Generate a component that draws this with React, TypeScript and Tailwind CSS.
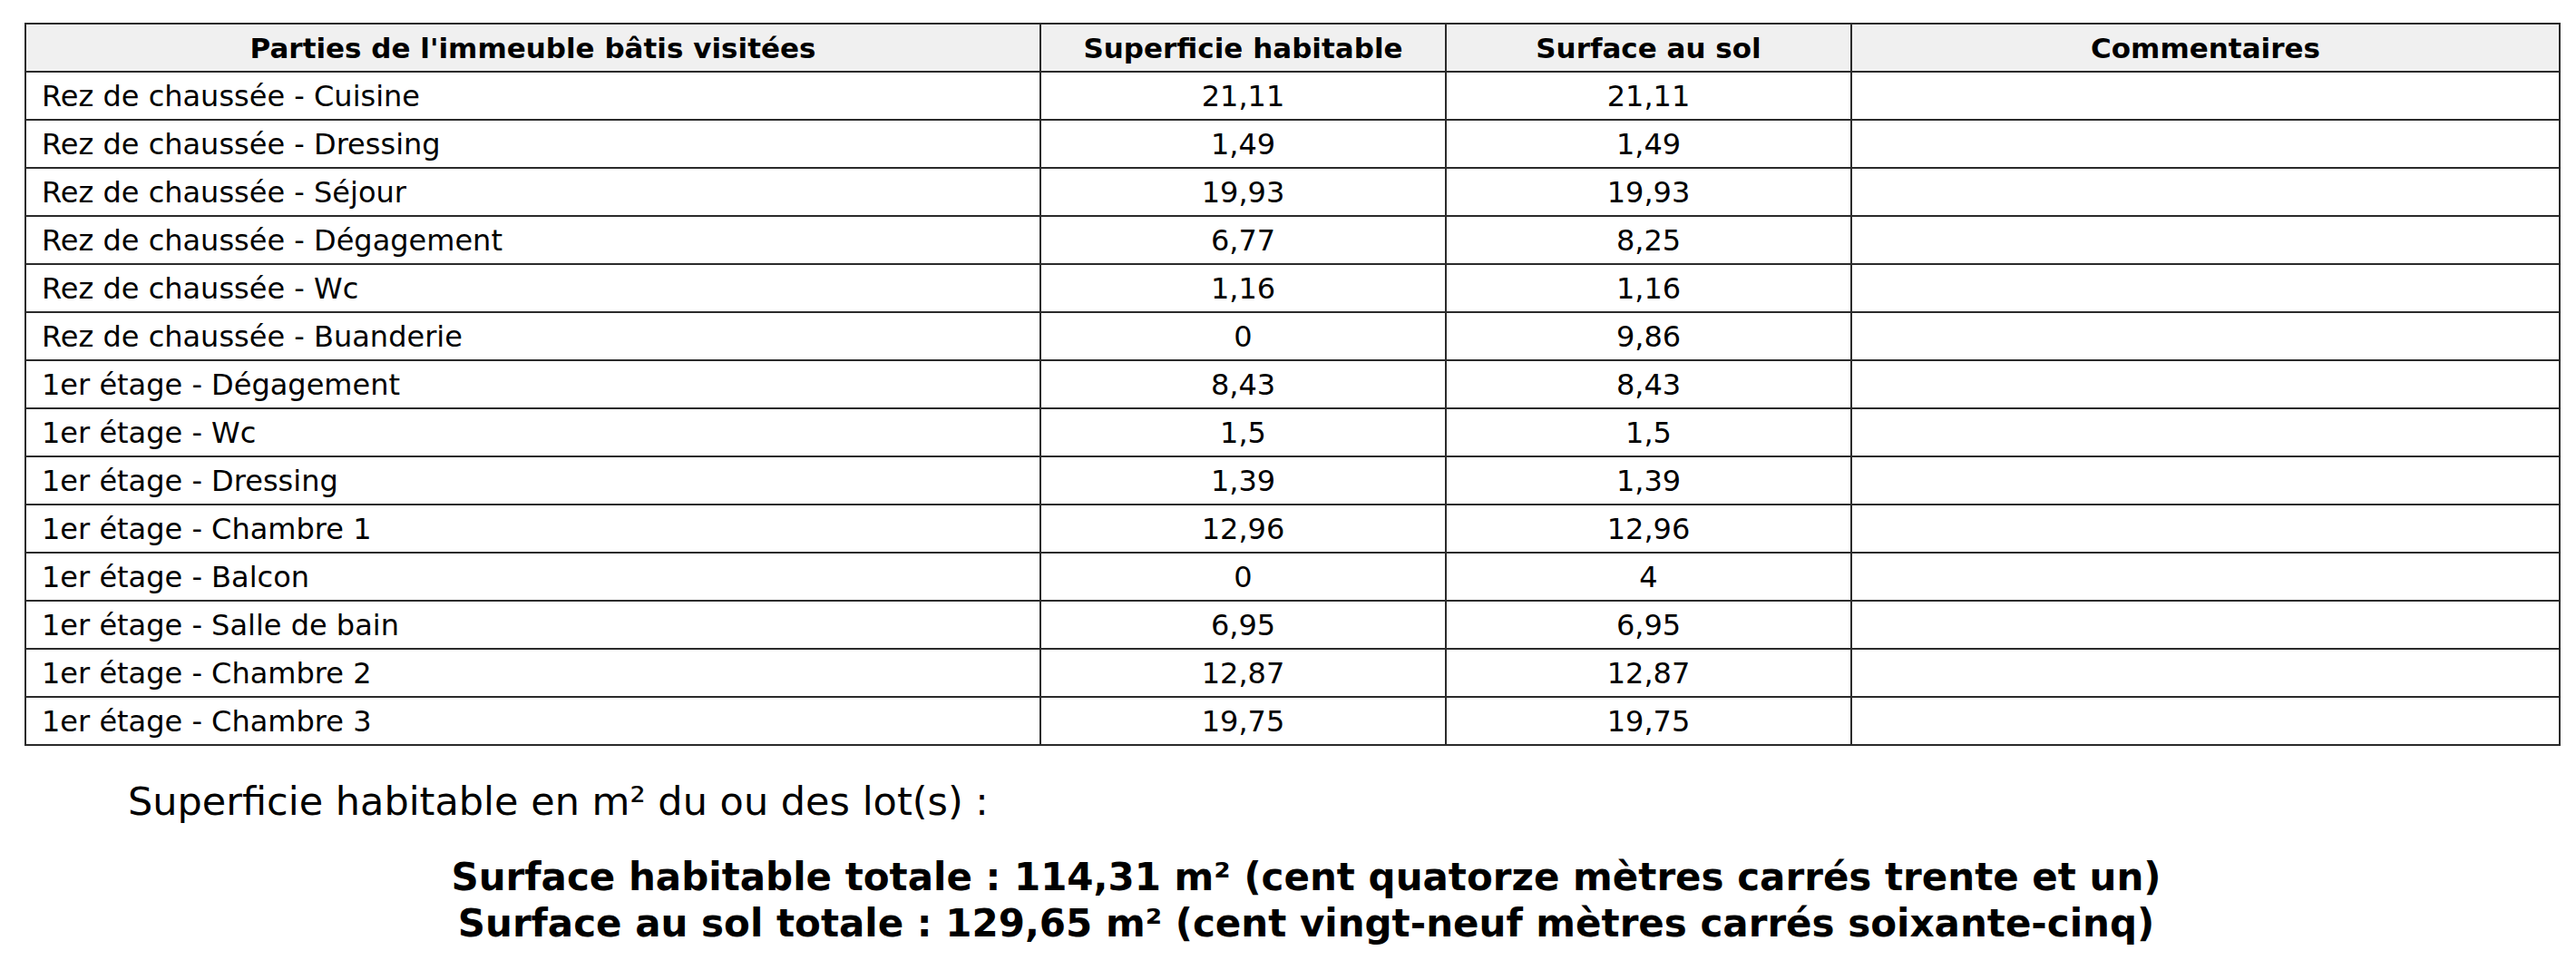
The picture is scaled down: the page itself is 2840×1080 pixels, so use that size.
import React from "react";

const rows: [string, string, string][] = [
  ["Rez de chaussée - Cuisine", "21,11", "21,11"],
  ["Rez de chaussée - Dressing", "1,49", "1,49"],
  ["Rez de chaussée - Séjour", "19,93", "19,93"],
  ["Rez de chaussée - Dégagement", "6,77", "8,25"],
  ["Rez de chaussée - Wc", "1,16", "1,16"],
  ["Rez de chaussée - Buanderie", "0", "9,86"],
  ["1er étage - Dégagement", "8,43", "8,43"],
  ["1er étage - Wc", "1,5", "1,5"],
  ["1er étage - Dressing", "1,39", "1,39"],
  ["1er étage - Chambre 1", "12,96", "12,96"],
  ["1er étage - Balcon", "0", "4"],
  ["1er étage - Salle de bain", "6,95", "6,95"],
  ["1er étage - Chambre 2", "12,87", "12,87"],
  ["1er étage - Chambre 3", "19,75", "19,75"],
];

export default function App() {
  return (
    <div className="w-[2840px] h-[1080px] bg-white text-black overflow-hidden font-['DejaVu_Sans',_Verdana,_sans-serif]">
      <div className="pt-[25px] pl-[27px]">
        <table className="border-collapse table-fixed w-[2794px]">
          <colgroup>
            <col className="w-[1119px]" />
            <col className="w-[447px]" />
            <col className="w-[447px]" />
            <col className="w-[781px]" />
          </colgroup>
          <thead>
            <tr className="bg-[#f0f0f0] h-[53px]">
              <th className="border-2 border-[#2b2b2b] text-[31px] leading-[36px] font-bold text-center p-0">Parties de l'immeuble bâtis visitées</th>
              <th className="border-2 border-[#2b2b2b] text-[31px] leading-[36px] font-bold text-center p-0">Superficie habitable</th>
              <th className="border-2 border-[#2b2b2b] text-[31px] leading-[36px] font-bold text-center p-0">Surface au sol</th>
              <th className="border-2 border-[#2b2b2b] text-[31px] leading-[36px] font-bold text-center p-0">Commentaires</th>
            </tr>
          </thead>
          <tbody>
            {rows.map((r, i) => (
              <tr key={i} className="h-[53px]">
                <td className="border-2 border-[#2b2b2b] text-[32px] leading-[38px] pl-[17px] py-0 text-left">{r[0]}</td>
                <td className="border-2 border-[#2b2b2b] text-[32px] leading-[38px] p-0 text-center">{r[1]}</td>
                <td className="border-2 border-[#2b2b2b] text-[32px] leading-[38px] p-0 text-center">{r[2]}</td>
                <td className="border-2 border-[#2b2b2b] p-0"></td>
              </tr>
            ))}
          </tbody>
        </table>
      </div>
      <div className="pl-[141px] mt-[35px] text-[43px] leading-[52px]">Superficie habitable en m² du ou des lot(s) :</div>
      <div className="mt-[32px] pl-[40px] flex flex-col items-center text-[42px] font-bold leading-[51px]">
        <div>Surface habitable totale : 114,31 m² (cent quatorze mètres carrés trente et un)</div>
        <div>Surface au sol totale : 129,65 m² (cent vingt-neuf mètres carrés soixante-cinq)</div>
      </div>
    </div>
  );
}
